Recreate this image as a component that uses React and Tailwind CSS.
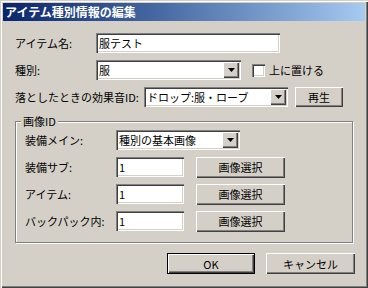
import React from 'react';

const raised =
  'bg-[#d4d0c8] shadow-[inset_1px_1px_0_#ffffff,inset_-1px_-1px_0_#404040,inset_-2px_-2px_0_#808080]';
const sunken =
  'bg-white shadow-[inset_1px_1px_0_#808080,inset_2px_2px_0_#404040,inset_-1px_-1px_0_#ffffff,inset_-2px_-2px_0_#d4d0c8]';

function Field({ value, className = '' }) {
  return (
    <div className={`${sunken} h-[20px] flex items-center pl-[3px] text-black shrink-0 ${className}`}>
      {value}
    </div>
  );
}

function Select({ value, className = '' }) {
  return (
    <div className={`${sunken} h-[20px] flex items-center pl-[3px] pr-[2px] shrink-0 ${className}`}>
      <span className="flex-1 whitespace-nowrap overflow-hidden">{value}</span>
      <div className={`${raised} w-[16px] h-[16px] flex items-center justify-center shrink-0`}>
        <svg width="7" height="4" viewBox="0 0 7 4">
          <path d="M0 0h7L3.5 4z" fill="#000" />
        </svg>
      </div>
    </div>
  );
}

function Button({ label, className = '', primary = false }) {
  return (
    <div
      className={`${
        primary
          ? 'bg-[#d4d0c8] shadow-[inset_1px_1px_0_#000000,inset_-1px_-1px_0_#000000,inset_2px_2px_0_#ffffff,inset_-2px_-2px_0_#404040,inset_-3px_-3px_0_#808080]'
          : raised
      } flex items-center justify-center shrink-0 whitespace-nowrap ${className}`}
    >
      {label}
    </div>
  );
}

export default function App() {
  const rows = [
    { label: '装備サブ:', value: '1' },
    { label: 'アイテム:', value: '1' },
    { label: 'バックパック内:', value: '1' },
  ];

  return (
    <div
      className="w-[368px] h-[288px] bg-[#d4d0c8] p-[3px] flex flex-col text-[11px] leading-[14px] text-black shadow-[inset_1px_1px_0_#d4d0c8,inset_2px_2px_0_#ffffff,inset_-1px_-1px_0_#404040,inset_-2px_-2px_0_#808080]"
      style={{ fontFamily: '"Noto Sans CJK JP", "Noto Sans", sans-serif' }}
    >
      <div className="h-[18px] bg-gradient-to-r from-[#0a246a] to-[#a6caf0] text-white text-[12px] font-bold flex items-center pl-[2px] shrink-0 whitespace-nowrap">
        アイテム種別情報の編集
      </div>

      <div className="pl-[12px] flex flex-col">
        <div className="mt-[12px] h-[20px] flex items-center">
          <span className="w-[81px] shrink-0 whitespace-nowrap">アイテム名:</span>
          <Field value="服テスト" className="w-[184px]" />
        </div>

        <div className="mt-[7px] h-[20px] flex items-center">
          <span className="w-[81px] shrink-0 whitespace-nowrap">種別:</span>
          <Select value="服" className="w-[145px]" />
          <div className={`${sunken} ml-[11px] w-[13px] h-[13px] shrink-0`} />
          <span className="ml-[4px] whitespace-nowrap">上に置ける</span>
        </div>

        <div className="mt-[7px] h-[20px] flex items-center">
          <span className="w-[129px] shrink-0 whitespace-nowrap">落としたときの効果音ID:</span>
          <Select value="ドロップ:服・ローブ" className="w-[144px]" />
          <Button label="再生" className="ml-[7px] w-[48px] h-[20px]" />
        </div>

        <div className="relative mt-[14px] w-[338px] h-[122px] border border-[#808080] shadow-[1px_1px_0_#ffffff,inset_1px_1px_0_#ffffff] pl-[9px] flex flex-col">
          <span className="absolute -top-[8px] left-[5px] px-[2px] bg-[#d4d0c8] whitespace-nowrap">画像ID</span>

          <div className="mt-[8px] h-[20px] flex items-center">
            <span className="w-[91px] shrink-0 whitespace-nowrap">装備メイン:</span>
            <Select value="種別の基本画像" className="w-[124px]" />
          </div>

          {rows.map((row) => (
            <div key={row.label} className="mt-[7px] h-[20px] flex items-center">
              <span className="w-[91px] shrink-0 whitespace-nowrap">{row.label}</span>
              <Field value={row.value} className="w-[68px]" />
              <Button label="画像選択" className="ml-[12px] w-[89px] h-[21px]" />
            </div>
          ))}
        </div>

        <div className="mt-[10px] flex">
          <Button label="OK" primary className="ml-[152px] w-[88px] h-[21px]" />
          <Button label="キャンセル" className="ml-[11px] w-[89px] h-[21px]" />
        </div>
      </div>
    </div>
  );
}
